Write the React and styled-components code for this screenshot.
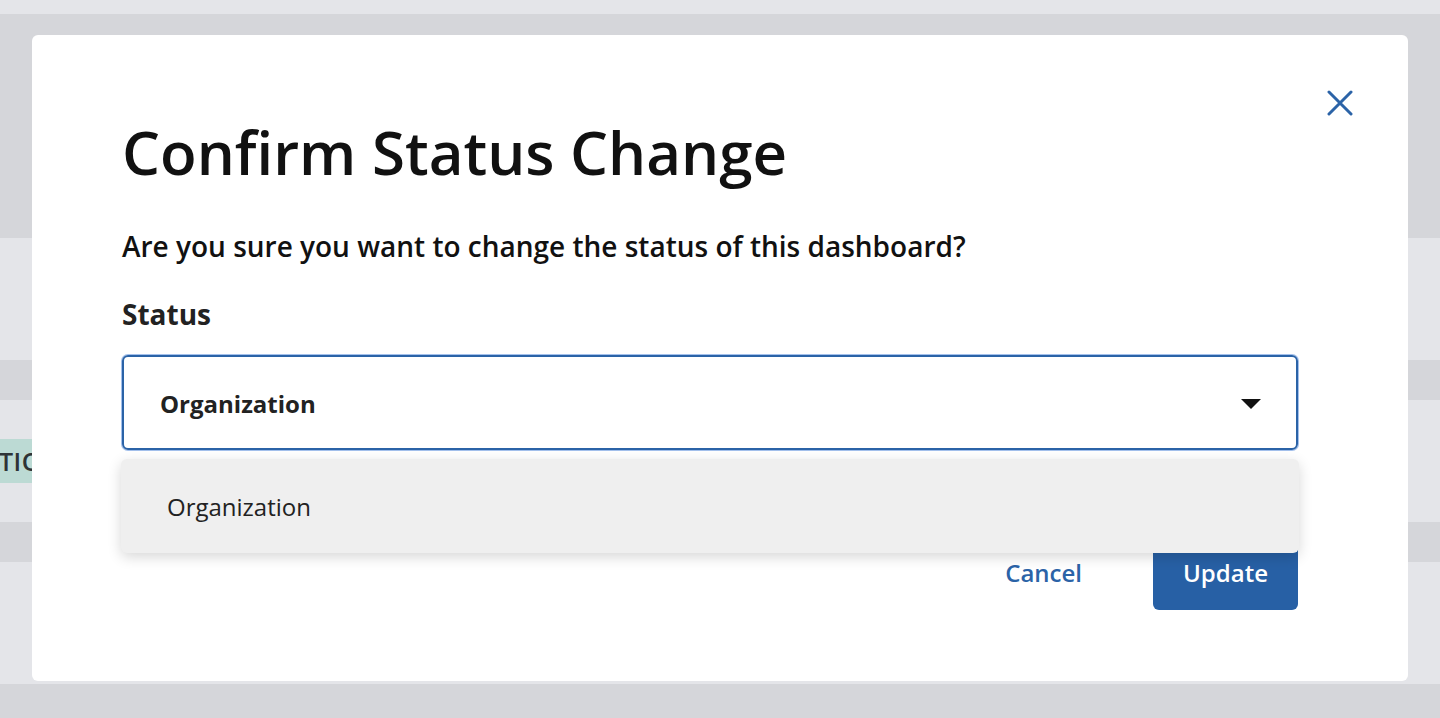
import React from 'react';
import styled, { createGlobalStyle } from 'styled-components';

const GlobalStyle = createGlobalStyle`
  html, body {
    margin: 0;
    padding: 0;
    background: #d5d6da;
    font-family: "Open Sans", "Noto Sans", sans-serif;
    overflow: hidden;
  }
`;

const bands = [
  { tone: 'light', height: 14 },
  { tone: 'dark', height: 224 },
  { tone: 'light', height: 122 },
  { tone: 'dark', height: 40 },
  { tone: 'light', height: 122, chip: 'TIO' },
  { tone: 'dark', height: 40 },
  { tone: 'light', height: 122 },
  { tone: 'dark', height: 34 },
];

const App = () => {
  return (
    <Page>
      <GlobalStyle />
      <Backdrop>
        {bands.map((band, i) => (
          <Band key={i} $tone={band.tone} $height={band.height}>
            {band.chip && <Chip>{band.chip}</Chip>}
          </Band>
        ))}
      </Backdrop>

      <Modal role="dialog" aria-labelledby="dlg-title">
        <CloseButton aria-label="Close">
          <svg width="26" height="26" viewBox="0 0 26 26" fill="none">
            <path d="M2 2L24 24M24 2L2 24" stroke="#2b63a7" strokeWidth="3" strokeLinecap="round" />
          </svg>
        </CloseButton>

        <Title id="dlg-title">Confirm Status Change</Title>
        <Question>Are you sure you want to change the status of this dashboard?</Question>
        <FieldLabel>Status</FieldLabel>

        <SelectWrap>
          <SelectBox>
            <SelectValue>Organization</SelectValue>
            <Caret />
          </SelectBox>
          <Menu>
            <MenuItem>Organization</MenuItem>
          </Menu>
        </SelectWrap>

        <Actions>
          <TextButton>Cancel</TextButton>
          <PrimaryButton>Update</PrimaryButton>
        </Actions>
      </Modal>
    </Page>
  );
};

const Page = styled.div`
  position: relative;
  width: 1440px;
  height: 718px;
  overflow: hidden;
`;

const Backdrop = styled.div`
  display: flex;
  flex-direction: column;
`;

const Band = styled.div`
  height: ${(p) => p.$height}px;
  background: ${(p) => (p.$tone === 'light' ? '#e4e5e9' : '#d5d6da')};
  display: flex;
  align-items: center;
`;

const Chip = styled.span`
  height: 44px;
  display: flex;
  align-items: center;
  padding: 0 12px 0 0;
  margin-left: -1px;
  background: #bcdad4;
  color: #2e3336;
  font-size: 25px;
  font-weight: 600;
  letter-spacing: 0.5px;
`;

const Modal = styled.div`
  position: absolute;
  top: 35px;
  left: 32px;
  width: 1376px;
  box-sizing: border-box;
  padding: 77px 110px 71px 90px;
  background: #ffffff;
  border-radius: 6px;
  display: flex;
  flex-direction: column;
`;

const CloseButton = styled.button`
  position: absolute;
  top: 55px;
  right: 55px;
  width: 26px;
  height: 26px;
  padding: 0;
  border: none;
  background: none;
  cursor: pointer;
  display: flex;
`;

const Title = styled.h2`
  margin: 0;
  font-size: 60px;
  line-height: 80px;
  font-weight: 600;
  color: #111111;
`;

const Question = styled.p`
  margin: 36px 0 0;
  font-size: 28px;
  line-height: 36px;
  font-weight: 600;
  color: #111111;
`;

const FieldLabel = styled.label`
  margin-top: 32px;
  font-size: 28px;
  line-height: 36px;
  font-weight: 700;
  color: #222222;
`;

const SelectWrap = styled.div`
  position: relative;
  margin-top: 23px;
`;

const SelectBox = styled.div`
  height: 95px;
  box-sizing: border-box;
  border: 2px solid #2b63a7;
  border-radius: 6px;
  box-shadow: 0 0 0 1px #a3c0ec;
  padding: 2px 35px 0 36px;
  display: flex;
  align-items: center;
  justify-content: space-between;
`;

const SelectValue = styled.span`
  font-size: 24px;
  font-weight: 700;
  color: #222222;
`;

const Caret = styled.span`
  width: 0;
  height: 0;
  border-left: 10px solid transparent;
  border-right: 10px solid transparent;
  border-top: 10px solid #111111;
`;

const Menu = styled.div`
  position: absolute;
  top: calc(100% + 9px);
  left: -1px;
  right: -1px;
  height: 94px;
  background: #efefef;
  border-radius: 6px;
  box-shadow: 0 4px 14px rgba(0, 0, 0, 0.16);
  display: flex;
  align-items: center;
  z-index: 2;
`;

const MenuItem = styled.div`
  padding-left: 46px;
  font-size: 24px;
  font-weight: 400;
  color: #222222;
`;

const Actions = styled.div`
  margin-top: 84px;
  display: flex;
  justify-content: flex-end;
  align-items: center;
  gap: 71px;
`;

const TextButton = styled.button`
  border: none;
  background: none;
  padding: 0;
  font-family: inherit;
  font-size: 24px;
  font-weight: 600;
  color: #2b63a7;
  cursor: pointer;
`;

const PrimaryButton = styled.button`
  width: 145px;
  height: 76px;
  border: none;
  border-radius: 6px;
  background: #2760a5;
  color: #ffffff;
  font-family: inherit;
  font-size: 24px;
  font-weight: 600;
  cursor: pointer;
`;

export default App;
